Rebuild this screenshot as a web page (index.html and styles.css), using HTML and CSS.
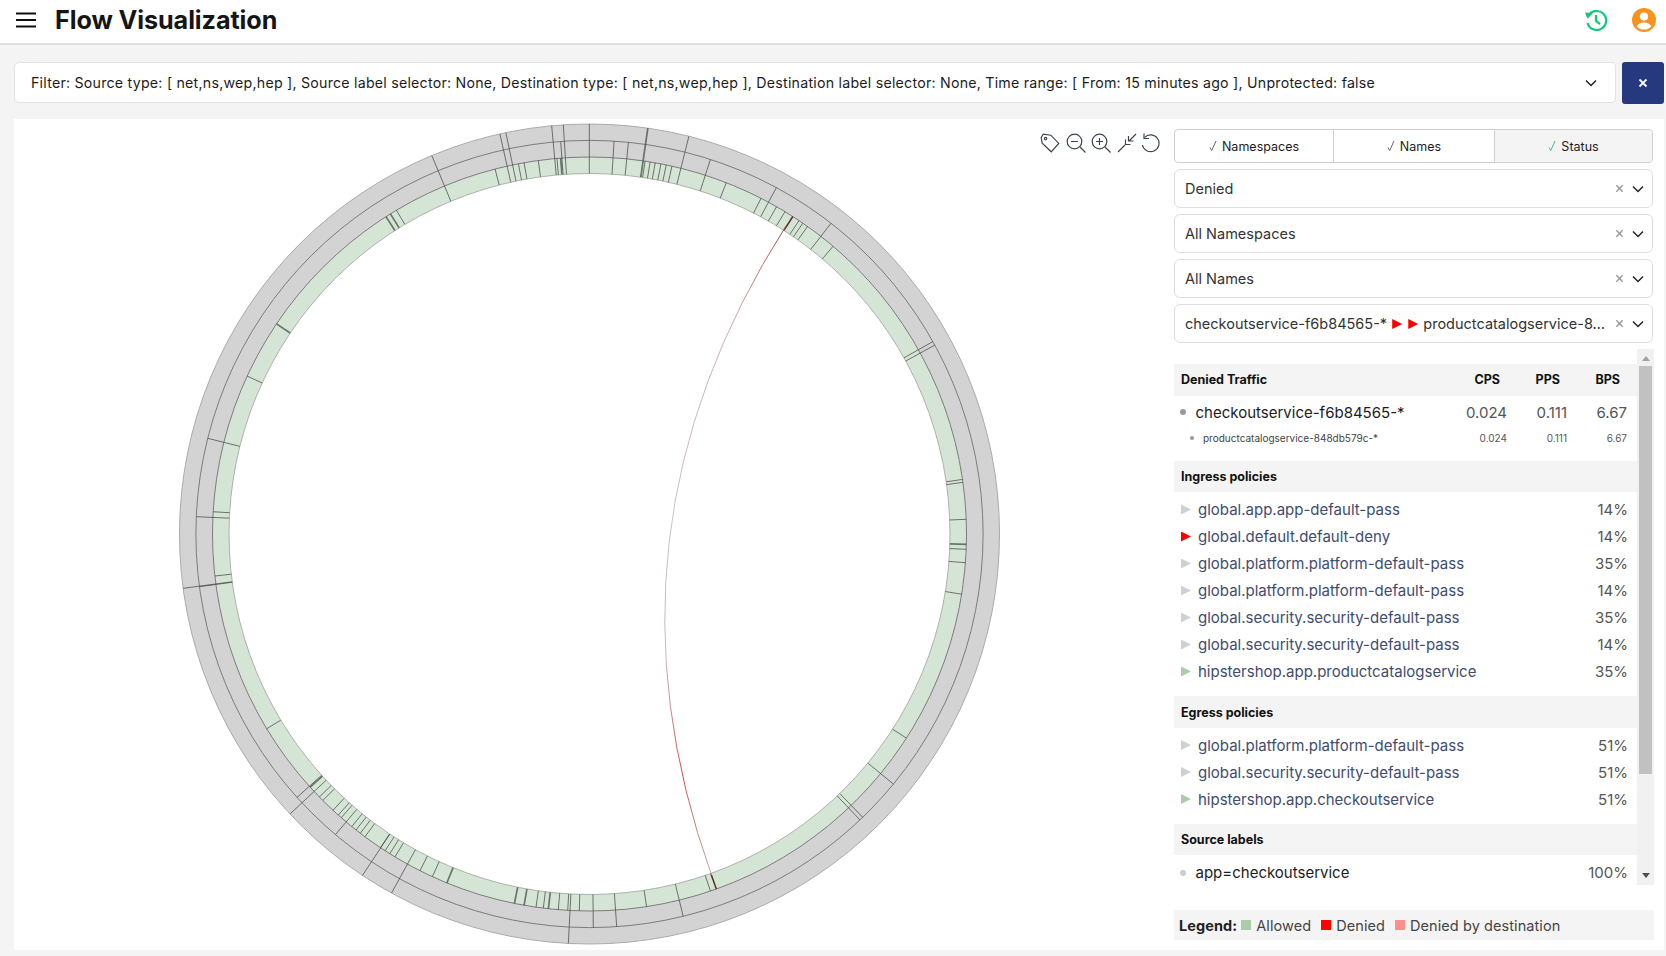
FILE: index.html
```html
<!DOCTYPE html>
<html lang="en">

<head>
    <meta charset="UTF-8">
    <title>Flow Visualization</title>
    <link rel="stylesheet" href="styles.css">
</head>

<body>
    <header class="top-bar">
        <svg class="menu-icon" viewBox="0 0 20 16"><path d="M0 1.5h20M0 8h20M0 14.5h20" /></svg>
        <h1 class="page-title">Flow Visualization</h1>
        <svg class="history-icon" viewBox="0 0 24 24">
            <path d="M4.2 8.2A9.5 9.5 0 1 1 3.5 15" />
            <path class="history-head" d="M1 4.5l8 .6-5.6 5.6z" />
            <path d="M12 7v6l4 3" />
        </svg>
        <svg class="user-icon" viewBox="0 0 24 24">
            <circle cx="12" cy="12" r="12" fill="#f7931e" />
            <circle cx="12" cy="8.6" r="4.1" fill="#fff" />
            <path d="M4.6 18.4c1.2-2.7 4-3.9 7.4-3.9s6.2 1.2 7.4 3.9c-1.8 2-4.4 3.2-7.4 3.2s-5.6-1.2-7.4-3.2z" fill="#fff" />
        </svg>
    </header>

    <section class="filter-row">
        <div class="filter-box">
            <span class="filter-text">Filter: Source type: [ net,ns,wep,hep ], Source label selector: None, Destination type: [ net,ns,wep,hep ], Destination label selector: None, Time range: [ From: 15 minutes ago ], Unprotected: false</span>
            <svg class="chevron" viewBox="0 0 12 8"><path d="M1 1.5l5 5 5-5" /></svg>
        </div>
        <button class="filter-close"><svg viewBox="0 0 10 10"><path d="M1.5 1.5l7 7M8.5 1.5l-7 7" /></svg></button>
    </section>

    <main class="card">
        <div class="chart-area">
            <svg id="flow-chart" class="flow-chart" viewBox="0 0 1160 831">
                <defs>
                    <linearGradient id="chord-fade" gradientUnits="userSpaceOnUse" x1="0" y1="105" x2="0" y2="760">
                        <stop offset="0" stop-color="#a8413f" />
                        <stop offset="0.14" stop-color="#d5a9a9" />
                        <stop offset="0.45" stop-color="#c8c4c4" />
                        <stop offset="0.66" stop-color="#c9b5b5" />
                        <stop offset="0.84" stop-color="#c2514f" />
                        <stop offset="1" stop-color="#c8a9a9" />
                    </linearGradient>
                </defs>
                <circle class="ring-outer" cx="575.5" cy="415" r="410" />
                <circle class="ring-line" cx="575.5" cy="415" r="393.6" />
                <circle class="ring-green" cx="575.5" cy="415" r="377" />
                <circle class="ring-inner" cx="575.5" cy="415" r="360.5" />
                <g id="ticks"></g>
                <path class="chord" d="M772 107Q575.5 415 697.5 756" />
            </svg>
            <div class="chart-tools">
                <svg viewBox="0 0 20 20"><path d="M1.2 4.5l2-3.3 7.6 1 8 8.2-7.6 8.4-9-8.6z" /><circle cx="5.6" cy="5.6" r="1.2" /></svg>
                <svg viewBox="0 0 20 20"><circle cx="8.5" cy="8.5" r="7.3" /><path d="M5 8.5h7M14 14l5.5 5.5" /></svg>
                <svg viewBox="0 0 20 20"><circle cx="8.5" cy="8.5" r="7.3" /><path d="M5 8.5h7M8.5 5v7M14 14l5.5 5.5" /></svg>
                <svg viewBox="0 0 20 20"><path d="M1 19l7-7M8.5 6.5v5h5M19 1l-7 7M11.5 3v5h5" /></svg>
                <svg class="tool-undo" viewBox="0 0 20 20"><path d="M4.6 4.4A8.4 8.4 0 1 1 2.4 12" /><path d="M4 .5v5h5" /></svg>
            </div>
        </div>

        <aside class="side-panel">
            <div class="tabs">
                <div class="tab"><svg class="check" viewBox="0 0 8 12"><path d="M1 7.5l1.7 3L7 1" /></svg> Namespaces</div>
                <div class="tab"><svg class="check" viewBox="0 0 8 12"><path d="M1 7.5l1.7 3L7 1" /></svg> Names</div>
                <div class="tab tab-active"><svg class="check check-on" viewBox="0 0 8 12"><path d="M1 7.5l1.7 3L7 1" /></svg> Status</div>
            </div>

            <div class="select">
                <span class="select-value">Denied</span>
                <svg class="clear" viewBox="0 0 10 10"><path d="M1.5 1.5l7 7M8.5 1.5l-7 7" /></svg>
                <svg class="chevron" viewBox="0 0 12 8"><path d="M1 1.5l5 5 5-5" /></svg>
            </div>
            <div class="select">
                <span class="select-value">All Namespaces</span>
                <svg class="clear" viewBox="0 0 10 10"><path d="M1.5 1.5l7 7M8.5 1.5l-7 7" /></svg>
                <svg class="chevron" viewBox="0 0 12 8"><path d="M1 1.5l5 5 5-5" /></svg>
            </div>
            <div class="select">
                <span class="select-value">All Names</span>
                <svg class="clear" viewBox="0 0 10 10"><path d="M1.5 1.5l7 7M8.5 1.5l-7 7" /></svg>
                <svg class="chevron" viewBox="0 0 12 8"><path d="M1 1.5l5 5 5-5" /></svg>
            </div>
            <div class="select">
                <span class="select-value">checkoutservice-f6b84565-* <i class="tri tri-red"></i> <i class="tri tri-red"></i> productcatalogservice-8…</span>
                <svg class="clear" viewBox="0 0 10 10"><path d="M1.5 1.5l7 7M8.5 1.5l-7 7" /></svg>
                <svg class="chevron" viewBox="0 0 12 8"><path d="M1 1.5l5 5 5-5" /></svg>
            </div>

            <div class="details">
                <div class="details-body">
                    <div class="section-head traffic-row">
                        <span>Denied Traffic</span><span class="col-head">CPS</span><span class="col-head">PPS</span><span class="col-head">BPS</span>
                    </div>
                    <div class="traffic-row row-main">
                        <span class="row-label"><i class="dot"></i>checkoutservice-f6b84565-*</span><span class="num">0.024</span><span class="num">0.111</span><span class="num">6.67</span>
                    </div>
                    <div class="traffic-row row-sub">
                        <span class="row-label"><i class="dot dot-small"></i>productcatalogservice-848db579c-*</span><span class="num">0.024</span><span class="num">0.111</span><span class="num">6.67</span>
                    </div>

                    <div class="section-head section-gap">Ingress policies</div>
                    <div class="policy"><i class="tri"></i><span class="policy-name">global.app.app-default-pass</span><span class="num">14%</span></div>
                    <div class="policy"><i class="tri tri-red"></i><span class="policy-name">global.default.default-deny</span><span class="num">14%</span></div>
                    <div class="policy"><i class="tri"></i><span class="policy-name">global.platform.platform-default-pass</span><span class="num">35%</span></div>
                    <div class="policy"><i class="tri"></i><span class="policy-name">global.platform.platform-default-pass</span><span class="num">14%</span></div>
                    <div class="policy"><i class="tri"></i><span class="policy-name">global.security.security-default-pass</span><span class="num">35%</span></div>
                    <div class="policy"><i class="tri"></i><span class="policy-name">global.security.security-default-pass</span><span class="num">14%</span></div>
                    <div class="policy"><i class="tri tri-green"></i><span class="policy-name">hipstershop.app.productcatalogservice</span><span class="num">35%</span></div>

                    <div class="section-head section-gap">Egress policies</div>
                    <div class="policy"><i class="tri"></i><span class="policy-name">global.platform.platform-default-pass</span><span class="num">51%</span></div>
                    <div class="policy"><i class="tri"></i><span class="policy-name">global.security.security-default-pass</span><span class="num">51%</span></div>
                    <div class="policy"><i class="tri tri-green"></i><span class="policy-name">hipstershop.app.checkoutservice</span><span class="num">51%</span></div>

                    <div class="section-head section-gap">Source labels</div>
                    <div class="label-row"><span class="row-label"><i class="dot dot-light"></i>app=checkoutservice</span><span class="num">100%</span></div>
                </div>
                <div class="scrollbar">
                    <i class="scroll-arrow"></i>
                    <div class="scroll-track"><div class="scroll-thumb"></div></div>
                    <i class="scroll-arrow scroll-arrow-down"></i>
                </div>
            </div>

            <div class="legend">
                <b>Legend:</b>
                <i class="swatch swatch-allowed"></i><span>Allowed</span>
                <i class="swatch swatch-denied"></i><span>Denied</span>
                <i class="swatch swatch-dest"></i><span>Denied by destination</span>
            </div>
        </aside>
    </main>

    <script src="chart.js"></script>
</body>

</html>
```

FILE: styles.css
```css
* {
    box-sizing: border-box;
}

body {
    margin: 0;
    height: 956px;
    overflow: hidden;
    background-color: #f4f4f4;
    color: #1c1c1c;
    font-family: Inter, "Noto Sans", sans-serif;
    font-size: 14px;
}

i {
    display: inline-block;
}

.top-bar {
    height: 45px;
    display: flex;
    align-items: center;
    padding: 0 10px 3px 16px;
    background-color: #fff;
    border-bottom: 2px solid #dcdce2;
}

.menu-icon {
    width: 20px;
    height: 16px;
    margin-top: -1px;
    fill: none;
    stroke: #111;
    stroke-width: 2;
}

.page-title {
    flex: 1;
    margin: 0 0 0 19px;
    font-size: 25.2px;
    font-weight: 700;
    color: #151515;
    letter-spacing: -0.1px;
}

.history-icon {
    width: 24px;
    height: 24px;
    fill: none;
    stroke: #12c77c;
    stroke-width: 2.2;
}

.history-head {
    fill: #12c77c;
    stroke: none;
}

.user-icon {
    width: 24px;
    height: 24px;
    margin-left: 24px;
}

.filter-row {
    display: flex;
    gap: 6px;
    padding: 17px 2px 15px 14px;
}

.filter-box {
    flex: 1;
    height: 41px;
    display: flex;
    align-items: center;
    justify-content: space-between;
    padding: 0 18px 0 16px;
    background-color: #fff;
    border: 1px solid #e2e2e2;
    border-radius: 5px;
    font-size: 14.2px;
    letter-spacing: 0.23px;
}

.filter-close {
    width: 42px;
    height: 42px;
    display: flex;
    align-items: center;
    justify-content: center;
    padding: 0;
    background-color: #27397e;
    border: none;
    border-radius: 3px;
}

.filter-close svg {
    width: 10px;
    height: 10px;
    fill: none;
    stroke: #fff;
    stroke-width: 1.8;
}

.chevron {
    width: 12px;
    height: 8px;
    flex: none;
    fill: none;
    stroke: #222;
    stroke-width: 1.5;
}

.clear {
    width: 9px;
    height: 9px;
    flex: none;
    fill: none;
    stroke: #999;
    stroke-width: 1.6;
}

.card {
    display: flex;
    height: 831px;
    margin: 0 2px 0 14px;
    background-color: #fff;
}

.chart-area {
    position: relative;
    width: 1160px;
    flex: none;
}

.flow-chart {
    display: block;
    width: 1160px;
    height: 831px;
    filter: blur(0.35px);
}

.ring-outer {
    fill: #d3d3d3;
    stroke: #aaa;
}

.ring-line {
    fill: none;
    stroke: #7c7c7c;
}

.ring-green {
    fill: #d5e5d5;
    stroke: #7c7c7c;
}

.ring-inner {
    fill: #fff;
    stroke: #a9b4a9;
}

.tick {
    stroke: #4a4a4a;
    stroke-width: 1;
    stroke-opacity: 0.75;
}

.tick-heavy {
    stroke-width: 1.7;
    stroke: #445044;
}

.tick-red {
    stroke: #5d2a28;
    stroke-width: 1.5;
    stroke-opacity: 1;
}

.chord {
    fill: none;
    stroke: url(#chord-fade);
    stroke-width: 1;
}

.chart-tools {
    position: absolute;
    top: 14px;
    left: 1026px;
    display: flex;
    gap: 5.5px;
}

.chart-tools svg {
    width: 20px;
    height: 20px;
    fill: none;
    stroke: #3c4650;
    stroke-width: 1.2;
}

.chart-tools .tool-undo {
    margin-left: -2px;
}

.side-panel {
    flex: 1;
    min-width: 0;
    padding-top: 10px;
    margin-right: 10px;
}

.tabs {
    display: grid;
    grid-template-columns: 159px 161px 1fr;
    height: 34px;
    margin-right: 1px;
    background-color: #fff;
    border: 1px solid #d0d0d0;
    border-radius: 4px;
    overflow: hidden;
    font-size: 12.5px;
}

.tab {
    display: flex;
    align-items: center;
    justify-content: center;
    gap: 5px;
    border-right: 1px solid #d0d0d0;
}

.tab-active {
    background-color: #f4f4f4;
    border-right: none;
}

.check {
    width: 8px;
    height: 12px;
    fill: none;
    stroke: #555;
    stroke-width: 0.9;
}

.check-on {
    stroke: #2fb98a;
}

.select {
    display: flex;
    align-items: center;
    height: 39px;
    margin: 6px 1px 0 0;
    padding: 0 8px 0 10px;
    background-color: #fff;
    border: 1px solid #dedede;
    border-radius: 6px;
    font-size: 14.5px;
    color: #333;
}

.select-value {
    flex: 1;
    min-width: 0;
    white-space: nowrap;
}

.select-value .tri {
    margin: 0 1px;
}

.select .clear {
    margin: 0 8px 0 6px;
}

.tri {
    width: 10px;
    height: 10px;
    background-color: #d0d0d0;
    clip-path: polygon(0 0, 100% 50%, 0 100%);
}

.tri-red {
    background-color: #f00;
}

.tri-green {
    background-color: #a9cca9;
}

.details {
    display: flex;
    height: 536px;
    margin: 6px 0 0;
    overflow: hidden;
}

.details-body {
    flex: 1;
    min-width: 0;
    padding-top: 15px;
}

.section-head {
    display: flex;
    align-items: center;
    height: 31.5px;
    padding: 0 10px 0 7px;
    background-color: #f4f4f4;
    font-size: 12.5px;
    font-weight: 700;
    color: #111;
}

.section-gap {
    margin-top: 11px;
    padding-top: 1px;
}

.traffic-row {
    display: grid;
    grid-template-columns: 1fr 60px 60px 60px;
    align-items: center;
}

.col-head {
    text-align: right;
    padding-right: 7px;
}

.row-main {
    height: 33px;
    padding: 0 10px 0 6px;
    font-size: 15px;
}

.row-sub {
    height: 21px;
    padding: 0 10px 3px 16px;
    font-size: 10px;
    color: #444;
}

.row-label {
    display: flex;
    align-items: center;
}

.dot {
    width: 6px;
    height: 6px;
    flex: none;
    margin-right: 9.5px;
    border-radius: 50%;
    background-color: #999;
}

.dot-small {
    width: 4px;
    height: 4px;
    margin-right: 9px;
}

.dot-light {
    background-color: #ccc;
}

.num {
    text-align: right;
    color: #555;
}

.policy {
    display: flex;
    align-items: center;
    height: 27px;
    padding: 0 9px 0 7px;
    font-size: 15px;
}

.policy .tri {
    flex: none;
    margin-right: 7px;
}

.section-head + .policy {
    margin-top: 4px;
}

.policy-name {
    flex: 1;
    color: #3f4c6e;
}

.label-row {
    display: flex;
    align-items: center;
    justify-content: space-between;
    height: 27px;
    margin-top: 4px;
    padding: 0 9px 0 6px;
    font-size: 15px;
}

.scrollbar {
    width: 17px;
    flex: none;
    display: flex;
    flex-direction: column;
    align-items: center;
    background-color: #f1f1f1;
}

.scroll-track {
    flex: 1;
    width: 13px;
}

.scroll-thumb {
    width: 13px;
    height: 408px;
    background-color: #c1c1c1;
}

.scroll-arrow {
    flex: none;
    width: 0;
    height: 0;
    margin: 7px 0 5px;
    border: 4px solid transparent;
    border-top: none;
    border-bottom: 5px solid #a3a3a3;
}

.scroll-arrow-down {
    margin: 5px 0 7px;
    border: 4px solid transparent;
    border-bottom: none;
    border-top: 5px solid #505050;
}

.legend {
    display: flex;
    align-items: center;
    height: 30px;
    margin-top: 25px;
    padding-left: 5px;
    background-color: #f4f4f4;
    font-size: 14.5px;
    letter-spacing: 0.08px;
    color: #444;
}

.legend b {
    margin-right: 4px;
    color: #222;
}

.swatch {
    width: 10px;
    height: 10px;
    margin-right: 5px;
}

.legend span {
    margin-right: 10px;
}

.swatch-allowed {
    background-color: #a9cca9;
}

.swatch-denied {
    background-color: #f00;
}

.swatch-dest {
    background-color: #ff8f8f;
}
```

FILE: chart.js
```js
// ring radii, outermost first
const OUT = 410, MID = 393.6, GRN = 377, IN = 360.5;
const CX = 575.5, CY = 415;
// circle centre in page coordinates, the tick list below is read off the page
const PAGE_CX = 589.5, PAGE_CY = 534;

// [x, y, where the tick starts, style]
const ticks = [
    // through all three rings
    [432.3, 156.7, OUT], [500, 134.3, OUT], [506, 133.3, OUT], [551.7, 126, OUT], [563.3, 125, OUT],
    [589.3, 124.3, OUT], [647.7, 129, OUT, 'heavy'], [688.7, 137, OUT], [568.3, 944, OUT],
    [391.7, 892.7, OUT], [362.7, 875, OUT], [290, 814, OUT], [183.3, 588.3, OUT],
    // middle and green ring
    [614, 142.3, MID], [628.3, 143.3, MID], [710, 160.7, MID], [776, 188.3, MID], [830.7, 223.7, MID],
    [932.7, 341.7, MID], [935, 345, MID], [893.3, 784, MID], [862.7, 817.3, MID], [860, 820, MID],
    [683.3, 916.7, MID], [616.7, 926.7, MID], [593.3, 927.7, MID], [335.7, 834.3, MID],
    [296.7, 797.7, MID], [196, 516.7, MID], [207.7, 438.3, MID], [199.3, 586.7, MID], [560.7, 141.7, MID],
    // green ring only
    [276.7, 324, GRN, 'heavy'], [247, 376, GRN], [386, 216.7, GRN, 'heavy'], [390.7, 214.3, GRN, 'heavy'],
    [396.7, 210.7, GRN], [495.3, 170, GRN], [518.3, 163.3, GRN], [524, 162.3, GRN], [538.3, 160.7, GRN],
    [560.7, 158.3, GRN, 'heavy'], [557, 159, GRN], [726, 183.3, GRN], [645, 161.7, GRN], [650, 162.7, GRN],
    [655, 164, GRN], [660.7, 165, GRN], [666, 166, GRN], [671.7, 167.3, GRN], [760.7, 199, GRN],
    [776, 207.7, GRN], [784, 213.3, GRN], [792.7, 216.7, GRN, 'red'], [798.3, 221.7, GRN], [802.7, 223.3, GRN],
    [807.3, 226.7, GRN], [832.7, 246.7, GRN], [963.3, 479.3, GRN], [963.3, 482.3, GRN], [966.7, 519.3, GRN],
    [967, 544.3, GRN, 'heavy'], [967, 549.3, GRN], [965.7, 562.7, GRN], [962.3, 594.3, GRN], [906.7, 738.3, GRN],
    [716.7, 890, GRN, 'red'], [710.7, 891.7, GRN], [646.7, 907.3, GRN], [579.3, 911.7, GRN], [567.7, 910.7, GRN],
    [558.3, 910, GRN], [548.3, 910, GRN, 'heavy'], [543.3, 908.3, GRN], [536, 907.3, GRN], [524, 905.7, GRN, 'heavy'],
    [514.3, 904, GRN, 'heavy'], [446.7, 883.3, GRN, 'heavy'], [432.3, 876.7, GRN], [420, 870.7, GRN],
    [395.7, 855.7, GRN], [390.7, 852.3, GRN], [386.7, 848.3, GRN], [381.7, 845.7, GRN], [365, 836.7, GRN],
    [360.7, 832.7, GRN], [356, 830, GRN], [351.7, 826.7, GRN], [340.7, 818.3, GRN], [338.3, 815, GRN],
    [333.3, 810, GRN], [323.3, 800, GRN], [319, 797.3, GRN], [310, 787.3, GRN, 'heavy'], [270, 726.7, GRN],
    [215, 576, GRN], [212.3, 511.7, GRN]
];

const group = document.getElementById('ticks');

ticks.forEach(function (t) {
    const angle = Math.atan2(t[1] - PAGE_CY, t[0] - PAGE_CX);
    const line = document.createElementNS('http://www.w3.org/2000/svg', 'line');
    line.setAttribute('x1', CX + t[2] * Math.cos(angle));
    line.setAttribute('y1', CY + t[2] * Math.sin(angle));
    line.setAttribute('x2', CX + IN * Math.cos(angle));
    line.setAttribute('y2', CY + IN * Math.sin(angle));
    line.setAttribute('class', t[3] ? 'tick tick-' + t[3] : 'tick');
    group.appendChild(line);
});
```
